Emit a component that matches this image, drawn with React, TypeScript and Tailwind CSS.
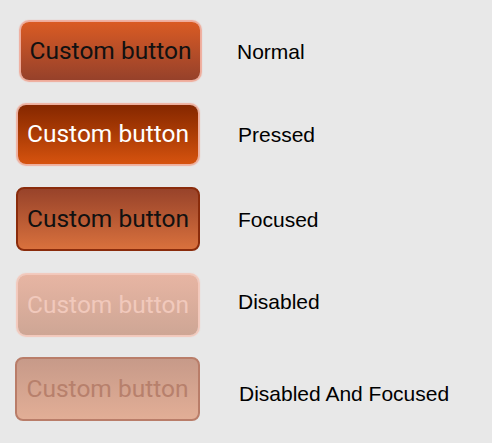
import React from "react";

type Row = {
  label: string;
  btn: string;
  text: string;
  rowClass: string;
  btnOffset: string;
  labelClass: string;
};

const rows: Row[] = [
  {
    label: "Normal",
    btn: "bg-gradient-to-b from-[#da5b22] to-[#96412a] shadow-[0_0_1px_2px_rgba(240,160,140,0.85)]",
    text: "text-[#111111]",
    rowClass: "mt-[22px]",
    btnOffset: "ml-[21px] w-[179px] h-[58px]",
    labelClass: "ml-[37px] mt-[0px]",
  },
  {
    label: "Pressed",
    btn: "bg-gradient-to-b from-[#852700] to-[#d6530f] shadow-[0_0_1px_2px_rgba(240,165,145,0.85)]",
    text: "text-white",
    rowClass: "mt-[25px]",
    btnOffset: "ml-[18px] w-[180px] h-[59px]",
    labelClass: "ml-[40px] mt-[0px]",
  },
  {
    label: "Focused",
    btn: "bg-gradient-to-b from-[#98432a] to-[#d9713d] border-2 border-[#8a2c0c]",
    text: "text-[#111111]",
    rowClass: "mt-[23px]",
    btnOffset: "ml-[16px] w-[184px] h-[64px]",
    labelClass: "ml-[38px] mt-[0px]",
  },
  {
    label: "Disabled",
    btn: "bg-gradient-to-b from-[#e7b5a3] to-[#cea695] shadow-[0_0_1px_2px_rgba(244,196,182,0.9)]",
    text: "text-[#f1c9bc]",
    rowClass: "mt-[24px]",
    btnOffset: "ml-[18px] w-[180px] h-[60px]",
    labelClass: "ml-[40px] mt-[-7px]",
  },
  {
    label: "Disabled And Focused",
    btn: "bg-gradient-to-b from-[#c79a89] to-[#e2ae96] border-2 border-[#b97d69]",
    text: "text-[#b7806c]",
    rowClass: "mt-[22px]",
    btnOffset: "ml-[15px] w-[185px] h-[64px]",
    labelClass: "ml-[39px] mt-[9px]",
  },
];

export default function App() {
  return (
    <div className="w-[492px] h-[443px] bg-[#e8e8e8] overflow-hidden flex flex-col">
      {rows.map((r) => (
        <div key={r.label} className={`flex items-center ${r.rowClass}`}>
          <div
            className={`${r.btnOffset} ${r.btn} rounded-[8px] flex items-center justify-center shrink-0`}
          >
            <span
              className={`${r.text} text-[24.5px] leading-none`}
              style={{ fontFamily: "Roboto, 'Noto Sans', sans-serif" }}
            >
              Custom button
            </span>
          </div>
          <span
            className={`${r.labelClass} text-[21px] leading-none text-black`}
            style={{ fontFamily: "'Liberation Sans', Arial, sans-serif" }}
          >
            {r.label}
          </span>
        </div>
      ))}
    </div>
  );
}
